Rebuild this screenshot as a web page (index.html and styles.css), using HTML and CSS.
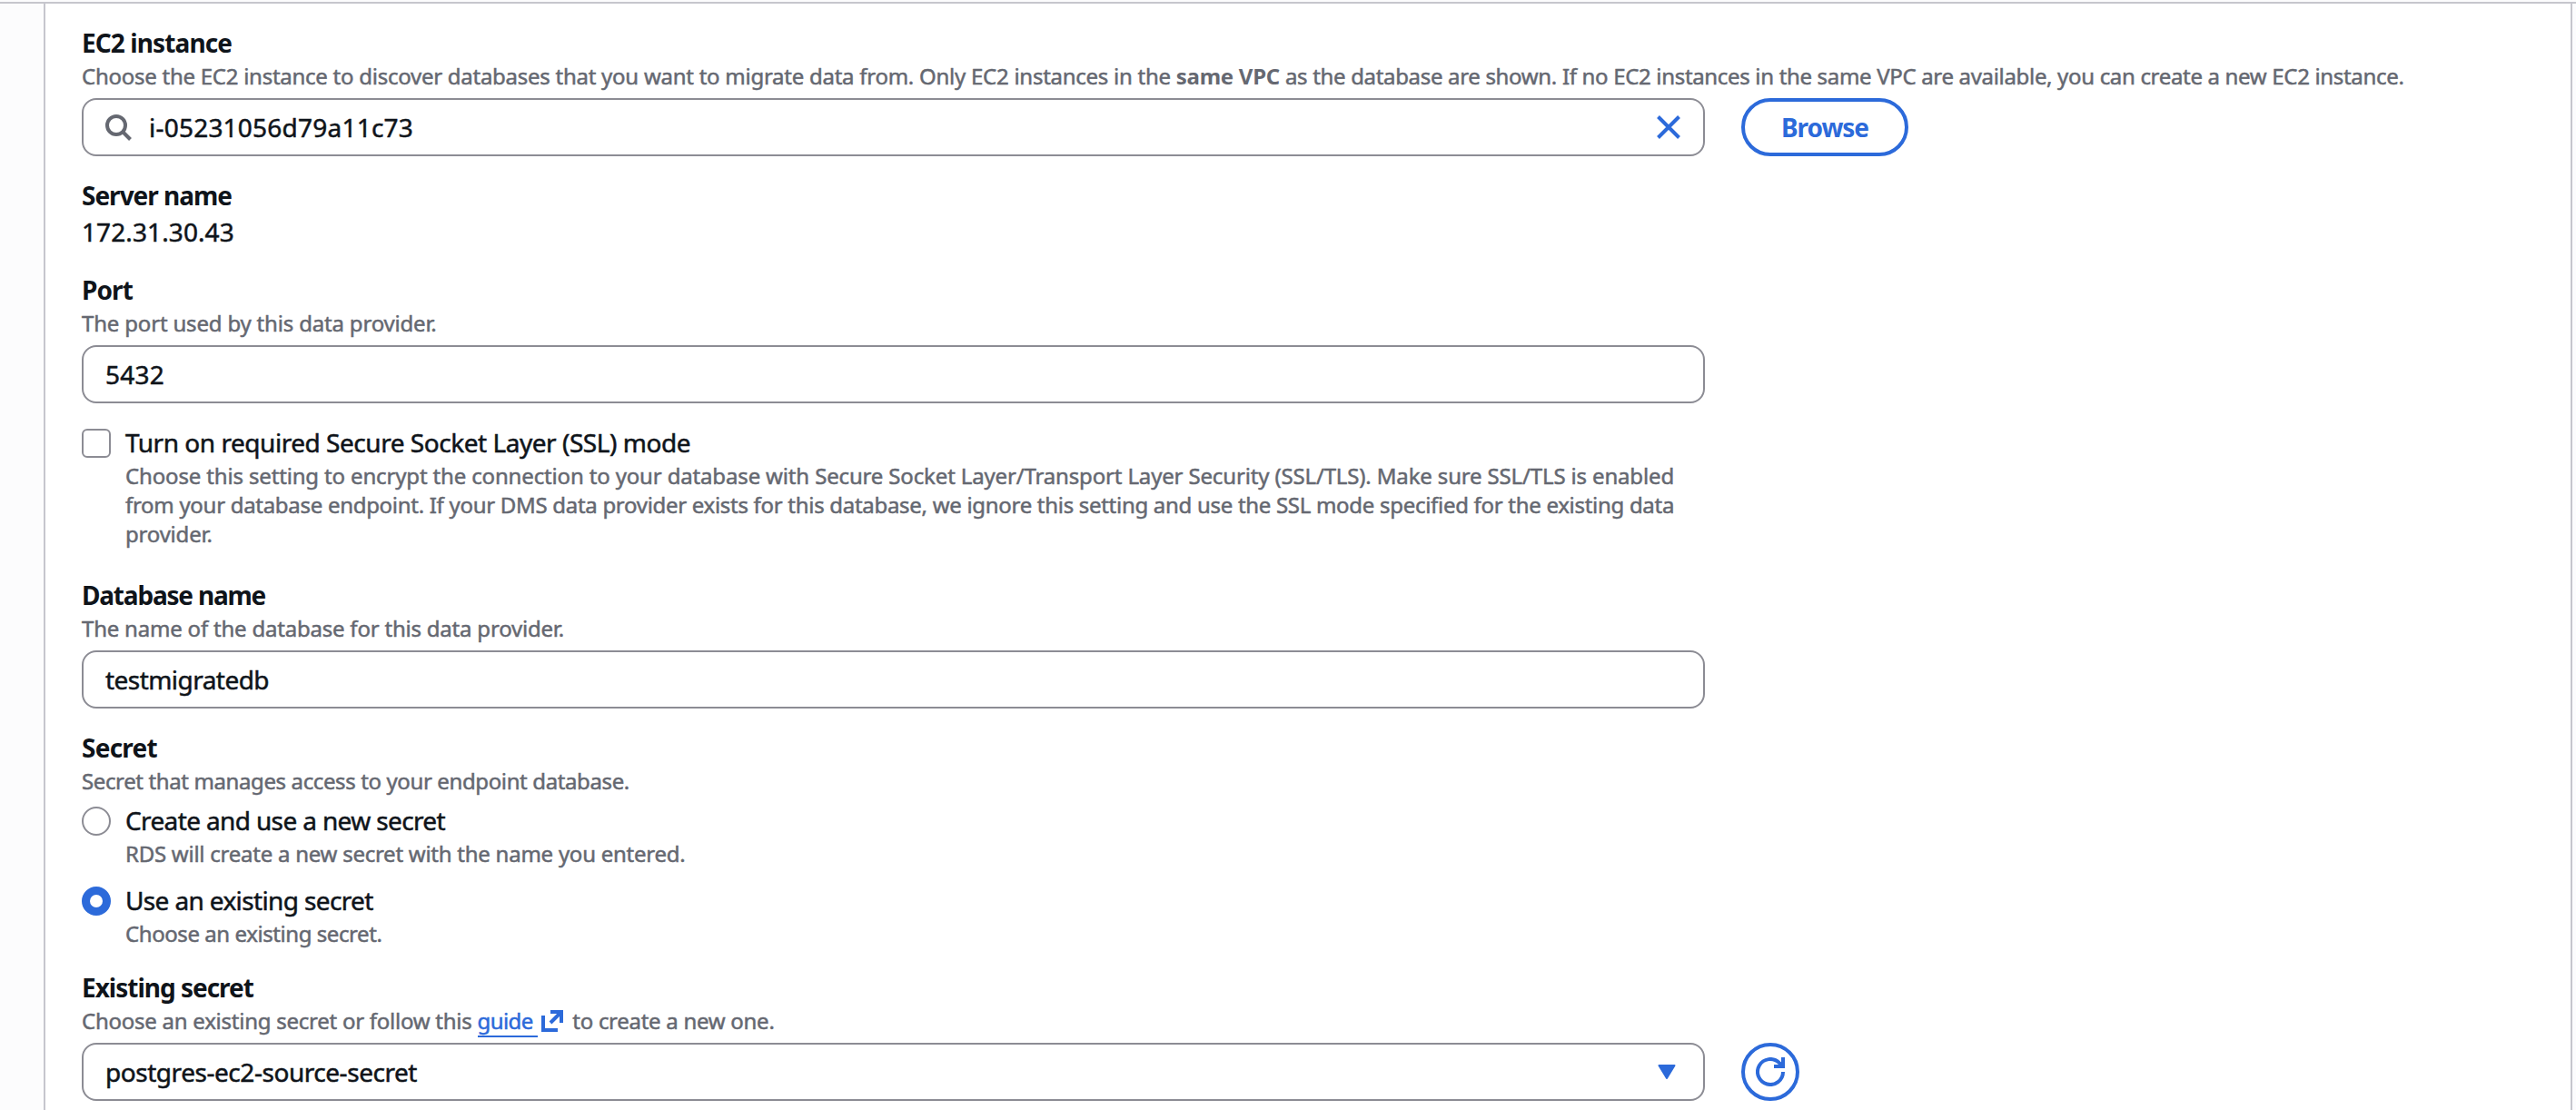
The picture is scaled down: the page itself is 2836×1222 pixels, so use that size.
FILE: index.html
```
<!DOCTYPE html>
<html lang="en">
<head>
    <meta charset="UTF-8">
    <meta name="viewport" content="width=device-width, initial-scale=1.0">
    <title>Data provider</title>
    <link rel="stylesheet" href="styles.css">
</head>
<body>
    <div class="container">
        <div class="field">
            <h3 class="ls_ec2">EC2 instance</h3>
            <p class="desc ls_choose">Choose the EC2 instance to discover databases that you want to migrate data from. Only EC2 instances in the <b>same VPC</b><span class="ls_vpc"> as the database are shown. If no EC2 instances in the same VPC are available, you can create a new EC2 instance.</span></p>
            <div class="row">
                <div class="input search">
                    <svg class="icon_search" width="32" height="32" viewBox="0 0 32 32">
                        <circle cx="14" cy="14" r="10" />
                        <path d="M21 21l8.5 8.5" />
                    </svg>
                    <span class="ls_id">i-05231056d79a11c73</span>
                    <svg class="icon_close" width="32" height="32" viewBox="0 0 32 32">
                        <path d="M4.5 4.5l23 23M27.5 4.5l-23 23" />
                    </svg>
                </div>
                <button class="browse">Browse</button>
            </div>
        </div>

        <div class="field">
            <h3 class="ls_server">Server name</h3>
            <p class="value ls_ip">172.31.30.43</p>
        </div>

        <div class="field port">
            <h3 class="ls_port">Port</h3>
            <p class="desc ls_portdesc">The port used by this data provider.</p>
            <div class="input"><span class="ls_id">5432</span></div>
        </div>

        <div class="option">
            <span class="checkbox"></span>
            <div class="option_text">
                <p class="value ls_ssl">Turn on required Secure Socket Layer (SSL) mode</p>
                <p class="desc">
                    <span class="line ls_ssl1">Choose this setting to encrypt the connection to your database with Secure Socket Layer/Transport Layer Security (SSL/TLS). Make sure SSL/TLS is enabled</span>
                    <span class="line ls_ssl2">from your database endpoint. If your DMS data provider exists for this database, we ignore this setting and use the SSL mode specified for the existing data</span>
                    <span class="line">provider.</span>
                </p>
            </div>
        </div>

        <div class="field database">
            <h3 class="ls_database">Database name</h3>
            <p class="desc ls_dbdesc">The name of the database for this data provider.</p>
            <div class="input"><span class="ls_db">testmigratedb</span></div>
        </div>

        <div class="field">
            <h3 class="ls_secret">Secret</h3>
            <p class="desc ls_secretdesc">Secret that manages access to your endpoint database.</p>
        </div>
        <div class="option first_radio">
            <span class="radio"></span>
            <div class="option_text">
                <p class="value ls_create">Create and use a new secret</p>
                <p class="desc ls_rds">RDS will create a new secret with the name you entered.</p>
            </div>
        </div>
        <div class="option second_radio">
            <span class="radio checked"></span>
            <div class="option_text">
                <p class="value ls_use">Use an existing secret</p>
                <p class="desc ls_existing">Choose an existing secret.</p>
            </div>
        </div>

        <div class="field">
            <h3 class="ls_server">Existing secret</h3>
            <p class="desc ls_follow">Choose an existing secret or follow this <a href="#">guide&nbsp;</a><svg class="icon_external" width="24" height="24" viewBox="0 0 24 24">
                    <path d="M2 6v16h16M10 2h12v12M22 2L10 14" />
                </svg><span class="ls_one">to create a new one.</span></p>
            <div class="row">
                <div class="input select">
                    <span class="ls_pg">postgres-ec2-source-secret</span>
                    <svg class="icon_arrow" width="20" height="16" viewBox="0 0 20 16">
                        <path d="M1.5 1h17L10 15z" />
                    </svg>
                </div>
                <button class="refresh">
                    <svg width="32" height="32" viewBox="0 0 32 32">
                        <path d="M30 16a14 14 0 1 1-4.1-9.9L30 10M30 0v10H20" />
                    </svg>
                </button>
            </div>
        </div>
    </div>
</body>
</html>
```
FILE: styles.css
```
*{
    margin: 0;
    padding: 0;
    box-sizing: border-box;
}
body{
    padding-top: 2px;
    height: 1222px;
    overflow: hidden;
    font-family: 'Noto Sans','Open Sans',sans-serif;
    font-size: 28px;
    line-height: 40px;
    color: #0f141a;
    background: linear-gradient(#c6c6cd, #c6c6cd) 0 2px / 100% 2px no-repeat #fcfcfd;
}
.container{
    margin: 2px 4px 0 48px;
    border: 2px solid #c6c6cd;
    border-width: 0 2px;
    padding: 0 40px;
    height: 1218px;
    background-color: #fff;
}
.field{
    padding-top: 23px;
}
.port{
    padding-top: 24px;
}
.database{
    padding-top: 31px;
}
h3{
    height: 41px;
    font-weight: 700;
    font-size: 28px;
}
.value{
    height: 40px;
    white-space: nowrap;
    -webkit-text-stroke: 0.5px #0f141a;
}
.field .value{
    margin-top: -1px;
}
.desc{
    font-size: 24px;
    line-height: 32px;
    white-space: nowrap;
    color: #656871;
    -webkit-text-stroke: 0.5px #656871;
}
.desc b{
    -webkit-text-stroke: 0;
}
.line{
    display: block;
    letter-spacing: -0.2px;
}
.row{
    display: flex;
    gap: 40px;
}
.input{
    display: flex;
    align-items: center;
    margin-top: 8px;
    border: 2px solid #8c8c94;
    border-radius: 16px;
    padding: 0 24px;
    width: 1787px;
    height: 64px;
    background-color: #fff;
    -webkit-text-stroke: 0.5px #0f141a;
}
.search{
    padding: 0 22px;
}
.search span{
    margin-left: 18px;
}
svg{
    fill: none;
    stroke: #2c6ada;
    stroke-width: 4;
}
.icon_search{
    stroke: #656871;
}
.icon_close{
    margin-left: auto;
}
.icon_arrow{
    margin: 0 6px 0 auto;
    fill: #2c6ada;
    stroke-width: 2;
    stroke-linejoin: round;
}
.icon_external{
    margin: 0 10px 0 4px;
    vertical-align: -3px;
}
button{
    margin-top: 8px;
    border: 4px solid #2c6ada;
    border-radius: 32px;
    width: 184px;
    height: 64px;
    font: 700 28px/40px 'Noto Sans','Open Sans',sans-serif;
    letter-spacing: -1.04px;
    color: #2c6ada;
    background-color: #fff;
}
.refresh{
    display: flex;
    align-items: center;
    justify-content: center;
    width: 64px;
}
.option{
    display: flex;
    padding-top: 23px;
}
.option_text .value{
    height: 41px;
}
.first_radio{
    padding-top: 7px;
}
.second_radio{
    padding-top: 15px;
}
.checkbox,.radio{
    margin: 5px 16px 0 0;
    border: 2px solid #8c8c94;
    border-radius: 6px;
    width: 32px;
    height: 32px;
}
.radio{
    border-radius: 50%;
}
.checked{
    border: 9px solid #2c6ada;
}
a{
    border-bottom: 2px solid #2c6ada;
    text-decoration: none;
    letter-spacing: -0.6px;
    color: #2c6ada;
    -webkit-text-stroke: 0.5px #2c6ada;
}
/* 字间距 */
.ls_ec2{ letter-spacing: -0.9px; }
.ls_choose{ letter-spacing: -0.26px; }
.ls_vpc{ letter-spacing: -0.325px; }
.ls_id{ letter-spacing: 0.22px; }
.ls_ip{ letter-spacing: 0.1px; }
.ls_server{ letter-spacing: -1.01px; }
.ls_port{ letter-spacing: -0.89px; }
.ls_portdesc{ letter-spacing: -0.18px; }
.ls_ssl{ letter-spacing: -0.463px; }
.ls_ssl1{ letter-spacing: -0.153px; }
.ls_ssl2{ letter-spacing: -0.294px; }
.ls_database{ letter-spacing: -1.2px; }
.ls_dbdesc{ letter-spacing: -0.21px; }
.ls_db{ letter-spacing: -0.547px; }
.ls_secret{ letter-spacing: -0.74px; }
.ls_secretdesc{ letter-spacing: -0.38px; }
.ls_create{ letter-spacing: -0.631px; }
.ls_rds{ letter-spacing: -0.25px; }
.ls_use{ letter-spacing: -0.63px; }
.ls_existing{ letter-spacing: -0.43px; }
.ls_follow{ letter-spacing: -0.25px; }
.ls_one{ letter-spacing: -0.28px; }
.ls_pg{ letter-spacing: -0.456px; }
```
